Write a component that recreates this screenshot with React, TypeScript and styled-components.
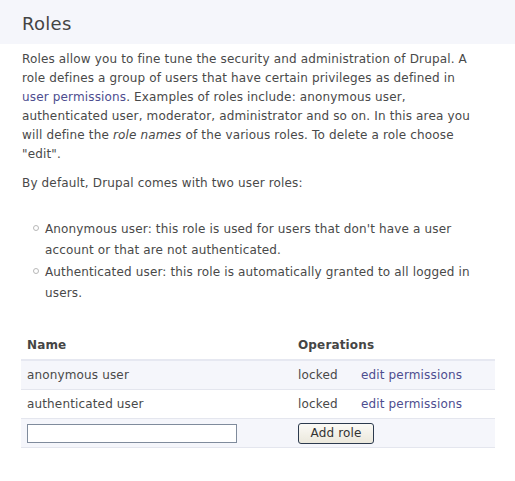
import { createGlobalStyle, styled } from "styled-components";

const GlobalStyle = createGlobalStyle`
  html, body {
    margin: 0;
    padding: 0;
    background: #ffffff;
  }
  body {
    font-family: "DejaVu Sans", Verdana, sans-serif;
    font-size: 12px;
    letter-spacing: 0.15px;
    color: #494949;
  }
`;

interface Role {
  name: string;
}

const roles: Role[] = [{ name: "anonymous user" }, { name: "authenticated user" }];

const App = () => {
  return (
    <>
      <GlobalStyle />
      <Page>
        <Header>
          <Title>Roles</Title>
        </Header>
        <Content>
          <Paragraph>
            Roles allow you to fine tune the security and administration of Drupal. A role defines a
            group of users that have certain privileges as defined in{" "}
            <Link href="#">user permissions</Link>. Examples of roles include: anonymous user,
            authenticated user, moderator, administrator and so on. In this area you will define the{" "}
            <em>role names</em> of the various roles. To delete a role choose "edit".
          </Paragraph>
          <Paragraph>By default, Drupal comes with two user roles:</Paragraph>
          <List>
            <Item>
              Anonymous user: this role is used for users that don't have a user account or that are
              not authenticated.
            </Item>
            <Item>
              Authenticated user: this role is automatically granted to all logged in users.
            </Item>
          </List>
          <Table>
            <thead>
              <tr>
                <HeadCell>Name</HeadCell>
                <HeadCell colSpan={2}>Operations</HeadCell>
              </tr>
            </thead>
            <tbody>
              {roles.map((role, i) => (
                <Row key={role.name} $odd={i % 2 === 0}>
                  <NameCell>{role.name}</NameCell>
                  <LockedCell>locked</LockedCell>
                  <Cell>
                    <Link href="#">edit permissions</Link>
                  </Cell>
                </Row>
              ))}
              <Row $odd>
                <NameCell>
                  <TextInput type="text" />
                </NameCell>
                <Cell colSpan={2}>
                  <Button type="button">Add role</Button>
                </Cell>
              </Row>
            </tbody>
          </Table>
        </Content>
      </Page>
    </>
  );
};

export default App;

const Page = styled.div`
  width: 515px;
  min-height: 481px;
`;

const Header = styled.div`
  height: 44px;
  background-color: #f5f6fb;
  padding-left: 22px;
  box-sizing: border-box;
  display: flex;
  align-items: center;
`;

const Title = styled.h2`
  margin: 2px 0 0;
  font-size: 18px;
  font-weight: normal;
  letter-spacing: 0.3px;
  color: #444444;
`;

const Content = styled.div`
  padding: 6px 20px 0 21px;
`;

const Paragraph = styled.p`
  margin: 0 0 10px 1px;
  max-width: 463px;
  line-height: 19px;
`;

const Link = styled.a`
  color: #4d4d8f;
  text-decoration: none;
`;

const List = styled.ul`
  margin: 26px 0 0;
  padding: 0 0 0 24px;
  list-style: none;
`;

const Item = styled.li`
  position: relative;
  line-height: 21px;
  margin-bottom: 1px;

  &::before {
    content: "";
    position: absolute;
    left: -12px;
    top: 6px;
    width: 4px;
    height: 4px;
    border: 1px solid #b8b8b8;
    border-radius: 50%;
  }
`;

const Table = styled.table`
  margin-top: 27px;
  width: 474px;
  border-collapse: collapse;
`;

const HeadCell = styled.th`
  text-align: left;
  font-weight: bold;
  color: #454545;
  height: 28px;
  padding: 0 6px;
  border-bottom: 2px solid #e6e8f1;
`;

const Row = styled.tr<{ $odd?: boolean }>`
  background-color: ${(p) => (p.$odd ? "#f5f6fb" : "#ffffff")};
  border-bottom: 1px solid #e4e6ee;
`;

const Cell = styled.td`
  height: 28px;
  padding: 0 6px;
  vertical-align: middle;
`;

const NameCell = styled(Cell)`
  width: 259px;
`;

const LockedCell = styled(Cell)`
  width: 51px;
`;

const TextInput = styled.input`
  display: block;
  width: 210px;
  height: 19px;
  box-sizing: border-box;
  border: 1px solid #7f8b9c;
  background: #ffffff;
  padding: 0 3px;
  font: inherit;
`;

const Button = styled.button`
  display: block;
  width: 76px;
  height: 21px;
  padding: 0;
  box-sizing: border-box;
  border: 1px solid #2c3a4e;
  border-radius: 3px;
  background: linear-gradient(#fbfaf6, #ebe8dc);
  font-family: "DejaVu Sans", Verdana, sans-serif;
  font-size: 12px;
  letter-spacing: 0.15px;
  color: #333333;
`;
